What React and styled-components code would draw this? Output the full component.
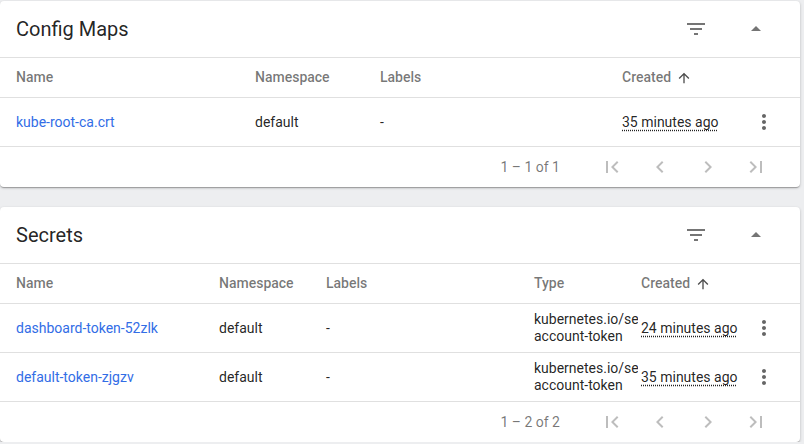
import React from 'react';
import styled, {createGlobalStyle} from "styled-components";

const GlobalStyle = createGlobalStyle`
    html, body {
        margin: 0;
        padding: 0;
        background: #edeef0;
        font-family: Roboto, "Noto Sans", sans-serif;
    }
`;

const Page = styled.div`
    display: flex;
    flex-direction: column;
    gap: 20px;
    padding: 1px 4px 0 0;
    width: 800px;
`;

const Card = styled.div`
    background: #ffffff;
    border-radius: 4px;
    box-shadow: 0 1px 3px rgba(0, 0, 0, 0.2), 0 1px 1px rgba(0, 0, 0, 0.14), 0 2px 1px -1px rgba(0, 0, 0, 0.12);
    overflow: hidden;
`;

const Header = styled.div`
    display: flex;
    align-items: center;
    height: 56px;
    padding: 0 20px 0 16px;
    border-bottom: 1px solid #e0e0e0;
`;

const Title = styled.div`
    flex: 1;
    font-size: 20px;
    font-weight: 400;
    color: rgba(0, 0, 0, 0.87);
`;

const Actions = styled.div`
    display: flex;
    gap: 12px;
`;

const IconButton = styled.div`
    display: flex;
    align-items: center;
    justify-content: center;
    width: 48px;
    height: 40px;
    color: ${p => p.$disabled ? 'rgba(0, 0, 0, 0.26)' : 'rgba(0, 0, 0, 0.54)'};
    cursor: pointer;

    svg {
        width: 24px;
        height: 24px;
        fill: currentColor;
    }
`;

const Row = styled.div`
    display: grid;
    grid-template-columns: ${p => p.$cols};
    align-items: center;
    padding-left: 16px;
    height: ${p => p.$head ? '39px' : '48px'};
    border-bottom: 1px solid #e0e0e0;
    font-size: 14px;
    line-height: 17px;
`;

const HeadCell = styled.div`
    display: flex;
    align-items: center;
    font-weight: 500;
    color: rgba(0, 0, 0, 0.54);
    white-space: nowrap;

    svg {
        width: 16px;
        height: 16px;
        margin-left: 5px;
        fill: rgba(0, 0, 0, 0.7);
    }
`;

const Cell = styled.div`
    color: rgba(0, 0, 0, 0.87);
    white-space: nowrap;
`;

const Link = styled.a`
    color: #326de6;
    text-decoration: none;
    cursor: pointer;
`;

const TypeCell = styled.div`
    color: rgba(0, 0, 0, 0.87);
    overflow: hidden;
    margin-right: 3px;
    height: 34px;
    overflow-wrap: normal;
`;

const Age = styled.span`
    color: rgba(0, 0, 0, 0.87);
    text-decoration: underline dotted;
    text-underline-offset: 3px;
    white-space: nowrap;
`;

const MenuCell = styled.div`
    display: flex;
    justify-content: flex-start;

    ${IconButton} {
        color: rgba(0, 0, 0, 0.6);
    }
`;

const Paginator = styled.div`
    display: flex;
    align-items: center;
    justify-content: flex-end;
    height: 40px;
    padding-right: 20px;
`;

const RangeLabel = styled.div`
    font-size: 14px;
    color: rgba(0, 0, 0, 0.54);
    margin-right: 28px;
`;

const FilterIcon = () => (
    <svg viewBox="0 0 24 24"><path d="M10 18h4v-2h-4v2zM3 6v2h18V6H3zm3 7h12v-2H6v2z"/></svg>
);
const DropUpIcon = () => (
    <svg viewBox="0 0 24 24"><path d="M7 14l5-5 5 5z"/></svg>
);
const ArrowUpIcon = () => (
    <svg viewBox="0 0 24 24"><path d="M4 12l1.41 1.41L11 7.83V20h2V7.83l5.58 5.59L20 12l-8-8-8 8z"/></svg>
);
const MoreIcon = () => (
    <svg viewBox="0 0 24 24"><path d="M12 8c1.1 0 2-.9 2-2s-.9-2-2-2-2 .9-2 2 .9 2 2 2zm0 2c-1.1 0-2 .9-2 2s.9 2 2 2 2-.9 2-2-.9-2-2-2zm0 6c-1.1 0-2 .9-2 2s.9 2 2 2 2-.9 2-2-.9-2-2-2z"/></svg>
);
const FirstIcon = () => (
    <svg viewBox="0 0 24 24"><path d="M18.41 16.59L13.82 12l4.59-4.59L17 6l-6 6 6 6zM6 6h2v12H6z"/></svg>
);
const PrevIcon = () => (
    <svg viewBox="0 0 24 24"><path d="M15.41 7.41L14 6l-6 6 6 6 1.41-1.41L10.83 12z"/></svg>
);
const NextIcon = () => (
    <svg viewBox="0 0 24 24"><path d="M10 6L8.59 7.41 13.17 12l-4.58 4.59L10 18l6-6z"/></svg>
);
const LastIcon = () => (
    <svg viewBox="0 0 24 24"><path d="M5.59 7.41L10.18 12l-4.59 4.59L7 18l6-6-6-6zM16 6h2v12h-2z"/></svg>
);

function CardHeader({title}) {
    return (
        <Header>
            <Title>{title}</Title>
            <Actions>
                <IconButton><FilterIcon/></IconButton>
                <IconButton><DropUpIcon/></IconButton>
            </Actions>
        </Header>
    );
}

function Pager({label}) {
    return (
        <Paginator>
            <RangeLabel>{label}</RangeLabel>
            <IconButton $disabled><FirstIcon/></IconButton>
            <IconButton $disabled><PrevIcon/></IconButton>
            <IconButton $disabled><NextIcon/></IconButton>
            <IconButton $disabled><LastIcon/></IconButton>
        </Paginator>
    );
}

const Menu = () => (
    <MenuCell>
        <IconButton><MoreIcon/></IconButton>
    </MenuCell>
);

const configCols = "239px 125px 242px 118px 1fr";
const secretCols = "203px 107px 208px 107px 99px 1fr";

const secrets = [
    {name: 'dashboard-token-52zlk', age: '24 minutes ago'},
    {name: 'default-token-zjgzv', age: '35 minutes ago'},
];

export default function App() {
    return (
        <React.Fragment>
            <GlobalStyle/>
            <Page>
                <Card>
                    <CardHeader title="Config Maps"/>
                    <Row $head $cols={configCols}>
                        <HeadCell>Name</HeadCell>
                        <HeadCell>Namespace</HeadCell>
                        <HeadCell>Labels</HeadCell>
                        <HeadCell>Created<ArrowUpIcon/></HeadCell>
                        <div/>
                    </Row>
                    <Row $cols={configCols}>
                        <Cell><Link>kube-root-ca.crt</Link></Cell>
                        <Cell>default</Cell>
                        <Cell>-</Cell>
                        <Cell><Age>35 minutes ago</Age></Cell>
                        <Menu/>
                    </Row>
                    <Pager label="1 – 1 of 1"/>
                </Card>

                <Card>
                    <CardHeader title="Secrets"/>
                    <Row $head $cols={secretCols}>
                        <HeadCell>Name</HeadCell>
                        <HeadCell>Namespace</HeadCell>
                        <HeadCell>Labels</HeadCell>
                        <HeadCell>Type</HeadCell>
                        <HeadCell>Created<ArrowUpIcon/></HeadCell>
                        <div/>
                    </Row>
                    {secrets.map(s => (
                        <Row key={s.name} $cols={secretCols}>
                            <Cell><Link>{s.name}</Link></Cell>
                            <Cell>default</Cell>
                            <Cell>-</Cell>
                            <TypeCell>kubernetes.io/service-account-token</TypeCell>
                            <Cell><Age>{s.age}</Age></Cell>
                            <Menu/>
                        </Row>
                    ))}
                    <Pager label="1 – 2 of 2"/>
                </Card>
            </Page>
        </React.Fragment>
    );
}
